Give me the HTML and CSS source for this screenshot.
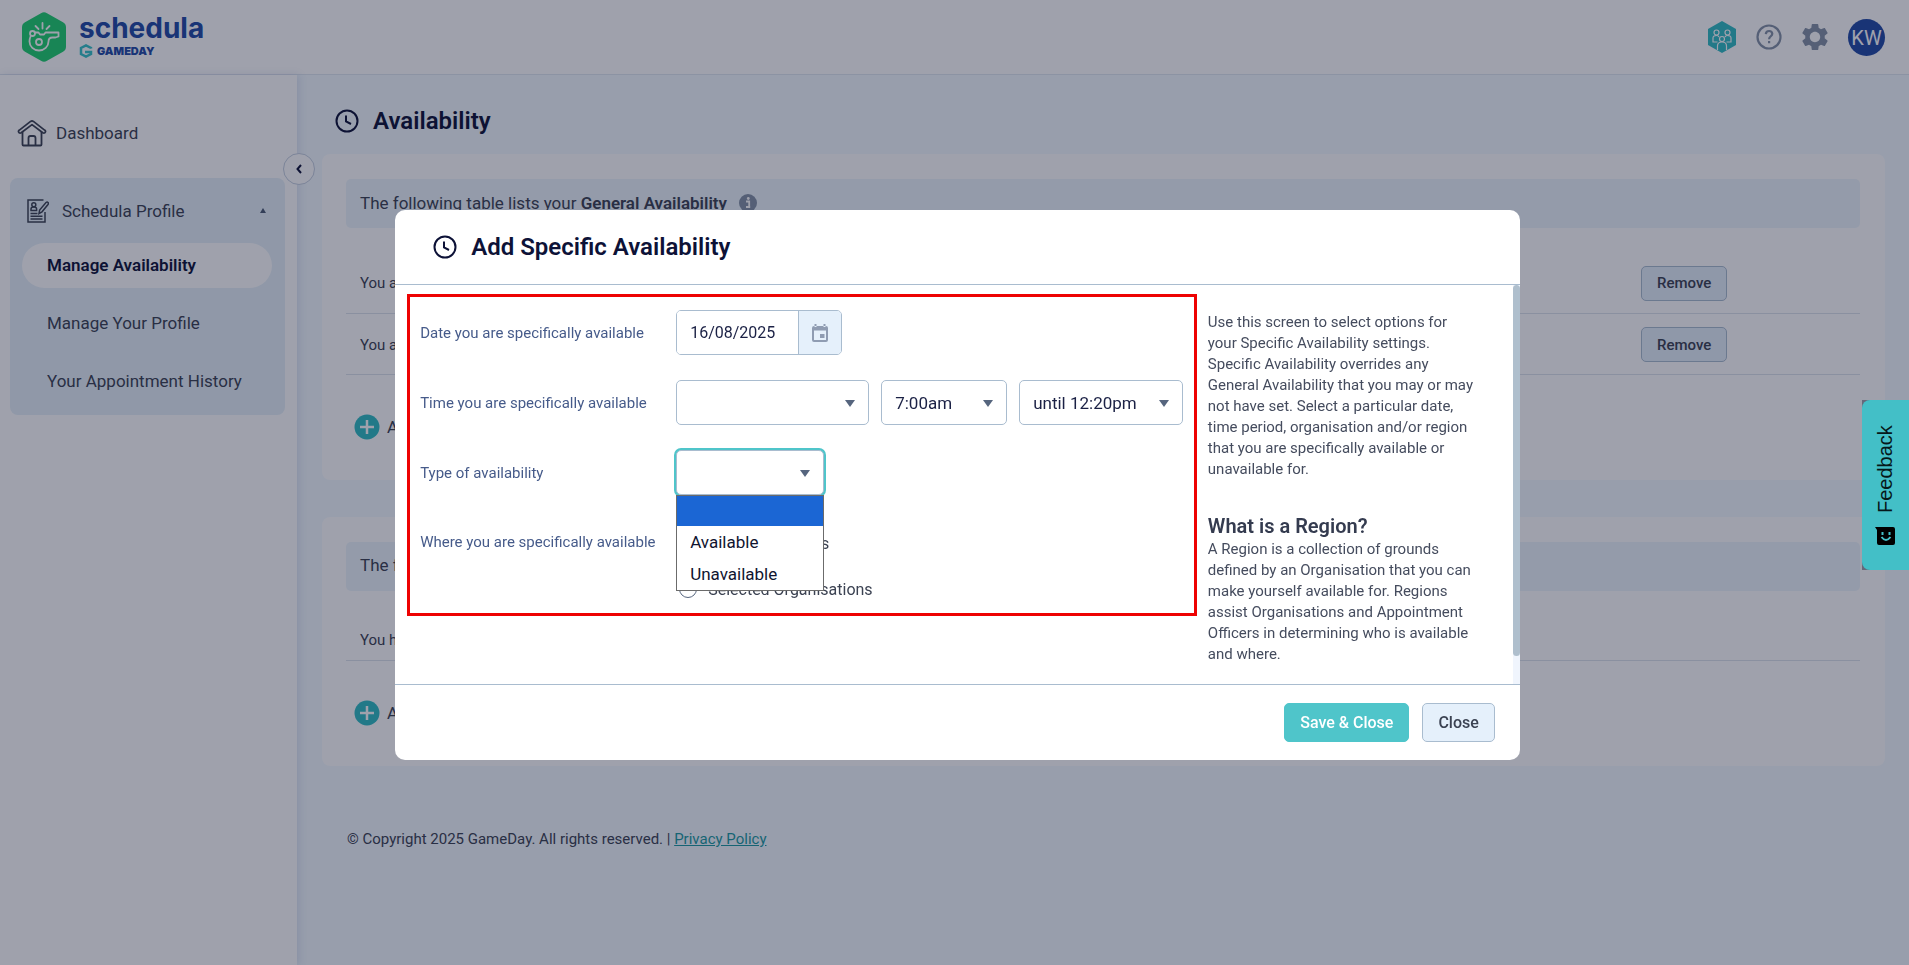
FILE: index.html
```html
<!DOCTYPE html>
<html lang="en">
<head>
    <meta charset="UTF-8">
    <meta name="viewport" content="width=device-width, initial-scale=1.0">
    <title>Schedula - Availability</title>
    <link rel="stylesheet" href="styles.css">
</head>
<body>
    <header class="topbar">
        <a href="#" class="logo">
            <svg class="logo-mark" viewBox="0 0 44 50" fill="none">
                <path d="M19 1.200q3-1.700 6 0l16 9q3 1.700 3 5v19.600q0 3.300-3 5l-16 9q-3 1.700-6 0l-16-9q-3-1.700-3-5V15.200q0-3.300 3-5z" fill="#1fd06f"/>
                <g stroke="#fff" stroke-width="1.800" stroke-linecap="round" stroke-linejoin="round">
                    <circle cx="17" cy="30" r="3"/>
                    <circle cx="10.500" cy="21.500" r="2.500"/>
                    <path d="M8.500 24.500Q7.500 27 7.500 29.500a9.500 9 0 0 0 19 0q0-4 4-4h3l3-1V20.500H23.500l-1.500 2h-4l-1.500-2h-3.500"/>
                    <path d="M13.500 14l3 3M20.500 11v5.500M27.500 14l-3 3"/>
                </g>
            </svg>
            <span class="logo-text">
                <span class="logo-name">schedula</span>
                <span class="logo-sub">
                    <svg width="14" height="14" viewBox="0 0 14 14" fill="none" stroke="#35c3c9" stroke-width="2.500">
                        <path d="M12 4.500V4L7 1.500 2 4v6l5 2.500L12 10V8H6"/>
                    </svg>
                    GAMEDAY
                </span>
            </span>
        </a>
        <nav class="topbar-icons">
            <a href="#" aria-label="Organisations">
                <svg width="28" height="32" viewBox="0 0 28 32" fill="none">
                    <path d="M14 0l14 8v16l-14 8-14-8V8z" fill="#2fbcc4"/>
                    <g stroke="#fff" stroke-width="1.200">
                        <circle cx="8.500" cy="11.500" r="2.500"/>
                        <circle cx="19.500" cy="11.500" r="2.500"/>
                        <path d="M9.500 21H5v-4q0-2.500 3.500-2.500 2 0 2.500 1.500M18.500 21H23v-4q0-2.500-3.500-2.500-2 0-2.500 1.500"/>
                        <circle cx="14" cy="18" r="2.500"/>
                        <path d="M9.500 29v-4q0-4 4.500-4t4.500 4v4"/>
                    </g>
                </svg>
            </a>
            <a href="#" aria-label="Help">
                <svg width="26" height="26" viewBox="0 0 26 26" fill="none" stroke="#8492a6" stroke-width="2.200">
                    <circle cx="13" cy="13" r="11.500"/>
                    <path d="M9.800 10.200q.3-3.200 3.300-3.200t3.200 2.800c0 2.400-3.200 2.600-3.200 5.400M13.100 17v2.200"/>
                </svg>
            </a>
            <a href="#" aria-label="Settings">
                <svg width="26" height="26" viewBox="2 2 20 20" fill="#8492a6">
                    <path d="M19.430 12.980c.040-.320.070-.640.070-.980s-.030-.660-.070-.980l2.110-1.650c.190-.150.240-.420.120-.640l-2-3.460c-.120-.220-.390-.300-.610-.220l-2.490 1c-.520-.400-1.080-.730-1.690-.980l-.380-2.650C14.460 2.180 14.250 2 14 2h-4c-.250 0-.460.180-.490.420l-.380 2.650c-.610.250-1.170.590-1.690.980l-2.490-1c-.230-.090-.490 0-.610.220l-2 3.460c-.130.220-.070.490.120.640l2.110 1.650c-.040.320-.070.650-.070.980s.030.660.070.980l-2.110 1.650c-.190.150-.240.420-.120.640l2 3.460c.120.220.390.300.610.220l2.490-1c.520.400 1.080.730 1.690.980l.380 2.650c.030.240.240.420.490.420h4c.250 0 .460-.180.490-.420l.380-2.650c.610-.250 1.170-.590 1.690-.980l2.490 1c.230.090.490 0 .610-.220l2-3.460c.120-.220.070-.490-.120-.640l-2.110-1.650zM12 16c-2.200 0-4-1.800-4-4s1.800-4 4-4 4 1.800 4 4-1.800 4-4 4z"/>
                </svg>
            </a>
            <a href="#" class="avatar">KW</a>
        </nav>
    </header>

    <div class="layout">
        <aside class="sidebar">
            <button class="collapse" aria-label="Collapse menu">
                <svg width="6" height="10" viewBox="0 0 6 10" fill="none" stroke="#0d1237" stroke-width="2"><path d="M5 1L1.500 5 5 9"/></svg>
            </button>
            <a href="#" class="nav-item">
                <svg width="30" height="28" viewBox="0 0 30 28" fill="none" stroke="#3b4252" stroke-width="1.800" stroke-linejoin="round">
                    <path d="M2.200 13.800q-1.600-1.400.2-2.700L13.600 2.400q1.400-1 2.800 0l11.200 8.700q1.800 1.300.2 2.700-.9.600-2 0L15 5.600 4.200 13.800q-1.100.6-2 0z"/>
                    <path d="M5.500 13v12.500q0 1 1 1h17q1 0 1-1V13M11.500 26.500V19q0-2 2-2h3q2 0 2 2v7.500"/>
                </svg>
                Dashboard
            </a>
            <div class="nav-group">
                <a href="#" class="nav-head">
                    <svg width="22" height="24" viewBox="0 0 22 24" fill="none" stroke="#3b4252" stroke-width="1.500">
                        <path d="M16.500 1H1v22h17V13"/>
                        <circle cx="6.800" cy="5.800" r="2"/>
                        <path d="M4 11.500V10q0-2 2.800-2t2.800 2v1.500zM3.500 14.500h7M3.500 17.200h12M3.500 20h12"/>
                        <path d="M12 14.500l.6-3.500L19 3.500q1.200-.8 2 0t0 2L15 12.800z"/>
                    </svg>
                    <span>Schedula Profile</span>
                    <svg class="nav-arrow" width="6" height="5" viewBox="0 0 6 5"><path d="M3 0l3 5H0z" fill="#4b5b73"/></svg>
                </a>
                <a href="#" class="nav-sub active">Manage Availability</a>
                <a href="#" class="nav-sub">Manage Your Profile</a>
                <a href="#" class="nav-sub">Your Appointment History</a>
            </div>
        </aside>

        <main class="main">
            <h1 class="page-title">
                <svg width="24" height="24" viewBox="0 0 24 24" fill="none" stroke="#0d1237" stroke-width="2"><circle cx="12" cy="12" r="10.500"/><path d="M11 6.500v6l5 2.500"/></svg>
                Availability
            </h1>

            <section class="card">
                <h2 class="card-head">
                    <span>The following table lists your <b>General Availability</b></span>
                    <svg width="18" height="18" viewBox="0 0 18 18"><circle cx="9" cy="9" r="9" fill="#8492a6"/><path d="M7 7.500h3.200V13h1M7 13h4" stroke="#fff" stroke-width="1.800" fill="none"/><circle cx="9.300" cy="4.500" r="1.400" fill="#fff"/></svg>
                </h2>
                <table class="list">
                    <tr>
                        <td>You are available every Saturday</td>
                        <td class="list-action"><button class="btn btn-small">Remove</button></td>
                    </tr>
                    <tr>
                        <td>You are available every Sunday</td>
                        <td class="list-action"><button class="btn btn-small">Remove</button></td>
                    </tr>
                </table>
                <a href="#" class="add">
                    <svg width="26" height="26" viewBox="0 0 26 26"><circle cx="13" cy="13" r="12.500" fill="#2fbcc4"/><path d="M13 6v14M6 13h14" stroke="#fff" stroke-width="2.500"/></svg>
                    Add General Availability
                </a>
            </section>

            <section class="card">
                <h2 class="card-head"><span>The following table lists your <b>Specific Availability</b></span></h2>
                <table class="list list-empty">
                    <tr><td>You have no Specific Availability</td></tr>
                </table>
                <a href="#" class="add">
                    <svg width="26" height="26" viewBox="0 0 26 26"><circle cx="13" cy="13" r="12.500" fill="#2fbcc4"/><path d="M13 6v14M6 13h14" stroke="#fff" stroke-width="2.500"/></svg>
                    Add Specific Availability
                </a>
            </section>

            <footer class="footer">© Copyright 2025 GameDay. All rights reserved. | <a href="#">Privacy Policy</a></footer>
        </main>
    </div>

    <div class="overlay">
        <div class="modal" role="dialog" aria-labelledby="modal-title">
            <div class="modal-header">
                <svg width="24" height="24" viewBox="0 0 24 24" fill="none" stroke="#0d1237" stroke-width="2"><circle cx="12" cy="12" r="10.500"/><path d="M11 6.500v6l5 2.500"/></svg>
                <h2 id="modal-title">Add Specific Availability</h2>
            </div>
            <div class="modal-scroll">
                <div class="modal-body">
                    <form class="form" id="availability">
                        <div class="row">
                            <label for="date">Date you are specifically available</label>
                            <div class="date">
                                <input type="text" id="date" value="16/08/2025">
                                <button type="button" aria-label="Pick a date">
                                    <svg width="16" height="18" viewBox="0 0 16 18"><path d="M2 2h12q2 0 2 2v12q0 2-2 2H2q-2 0-2-2V4q0-2 2-2zm0 4.500V16h12V6.500zM2.500 0h2v3h-2zM11.500 0h2v3h-2zM8 10h4.500v4H8z" fill="#8f9cb2" fill-rule="evenodd"/></svg>
                                </button>
                            </div>
                        </div>
                        <div class="row">
                            <label for="period">Time you are specifically available</label>
                            <div class="selects">
                                <span class="select select-period"><select id="period"><option></option></select></span>
                                <span class="select select-from"><select aria-label="From"><option>7:00am</option></select></span>
                                <span class="select select-until"><select aria-label="Until"><option>until 12:20pm</option></select></span>
                            </div>
                        </div>
                        <div class="row">
                            <label for="type">Type of availability</label>
                            <div class="select select-type">
                                <select id="type"><option></option><option>Available</option><option>Unavailable</option></select>
                                <ul class="menu">
                                    <li class="selected"></li>
                                    <li>Available</li>
                                    <li>Unavailable</li>
                                </ul>
                            </div>
                        </div>
                        <div class="row row-top">
                            <span class="label">Where you are specifically available</span>
                            <div class="radios">
                                <label><input type="radio" name="where"> All Organisations</label>
                                <label><input type="radio" name="where"> Selected Organisations</label>
                            </div>
                        </div>
                    </form>
                    <div class="help">
                        <p>Use this screen to select options for<br>
                        your Specific Availability settings.<br>
                        Specific Availability overrides any<br>
                        General Availability that you may or may<br>
                        not have set. Select a particular date,<br>
                        time period, organisation and/or region<br>
                        that you are specifically available or<br>
                        unavailable for.</p>
                        <h3>What is a Region?</h3>
                        <p>A Region is a collection of grounds<br>
                        defined by an Organisation that you can<br>
                        make yourself available for. Regions<br>
                        assist Organisations and Appointment<br>
                        Officers in determining who is available<br>
                        and where.</p>
                    </div>
                </div>
                <div class="scrollbar"><div class="scrollbar-thumb"></div></div>
            </div>
            <div class="modal-footer">
                <button class="btn btn-primary" form="availability">Save &amp; Close</button>
                <button class="btn">Close</button>
            </div>
        </div>
    </div>

    <button class="feedback">
        <svg width="20" height="18" viewBox="0 0 20 18">
            <path d="M0 0h18q2 0 2 2v14q0 2-2 2H4q-2 0-2-2V3z" fill="#000"/>
            <path d="M6.500 10q4.500 6 9 0" stroke="#43bfc7" stroke-width="2" fill="none"/>
            <path d="M6.500 5h2v3h-2zM13.500 5h2v3h-2z" fill="#43bfc7"/>
        </svg>
        <span>Feedback</span>
    </button>
</body>
</html>
```
FILE: styles.css
```css
* {
    margin: 0;
    padding: 0;
    box-sizing: border-box;
}

body {
    font-family: Roboto, 'Liberation Sans', sans-serif;
    font-size: 15px;
    background: #f3faff;
    color: #3b4252;
    min-height: 100vh;
    display: flex;
    flex-direction: column;
    overflow: hidden;
}

a {
    color: inherit;
    text-decoration: none;
}

button,
input,
select {
    font: inherit;
    color: inherit;
}

svg {
    flex-shrink: 0;
    display: block;
}

/* top bar */
.topbar {
    height: 75px;
    padding: 0 24px 0 22px;
    background: #fff;
    border-bottom: 1px solid #e0e8f0;
    display: flex;
    align-items: center;
    justify-content: space-between;
}

.logo {
    display: flex;
    align-items: center;
    gap: 13px;
    color: #214aa6;
}

.logo-mark {
    width: 44px;
    height: 50px;
}

.logo-name {
    display: block;
    font-family: Inter, sans-serif;
    font-size: 28px;
    line-height: 28px;
    font-weight: 700;
}

.logo-sub {
    display: flex;
    align-items: center;
    gap: 4px;
    font-family: Inter, sans-serif;
    font-size: 11px;
    line-height: 18px;
    font-weight: 900;
}

.topbar-icons {
    display: flex;
    align-items: center;
    gap: 20px;
}

.avatar {
    width: 37px;
    height: 37px;
    border-radius: 50%;
    background: #214aa6;
    color: #fff;
    font-size: 20px;
    line-height: 38px;
    text-align: center;
}

.layout {
    display: flex;
    flex: 1;
}

/* sidebar */
.sidebar {
    position: relative;
    width: 297px;
    padding: 36px 12px 0 10px;
    background: #fff;
    box-shadow: 2px 0 8px rgba(60, 90, 160, 0.15);
    font-size: 17px;
}

.collapse {
    position: absolute;
    right: -18px;
    top: 78px;
    width: 32px;
    height: 32px;
    border: 1px solid #c4cfdf;
    border-radius: 50%;
    background: #fff;
    display: flex;
    align-items: center;
    justify-content: center;
}

.nav-item {
    display: flex;
    align-items: center;
    gap: 9px;
    height: 44px;
    padding-left: 7px;
}

.nav-group {
    margin-top: 23px;
    padding: 0 13px 11px 12px;
    background: #e6f1f9;
    border-radius: 8px;
    display: flex;
    flex-direction: column;
    gap: 13px;
}

.nav-head {
    display: flex;
    align-items: center;
    height: 52px;
    padding: 13px 6px 0 5px;
    gap: 13px;
}

.nav-arrow {
    margin-left: auto;
}

.nav-sub {
    height: 45px;
    line-height: 45px;
    padding-left: 25px;
    border-radius: 23px;
}

.nav-sub.active {
    background: #fff;
    color: #0d1237;
    font-weight: 600;
}

/* content */
.main {
    flex: 1;
    padding: 28px 24px 0 25px;
}

.page-title {
    display: flex;
    align-items: center;
    gap: 14px;
    height: 36px;
    padding-left: 13px;
    margin-bottom: 15px;
    font-size: 24px;
    font-weight: 600;
    color: #0d1237;
}

.card {
    background: #fff;
    border-radius: 8px;
    padding: 25px 25px 39px 24px;
    margin-bottom: 37px;
}

.card-head {
    display: flex;
    align-items: center;
    gap: 12px;
    height: 49px;
    padding: 0 14px 2px;
    background: #edf6fc;
    border-radius: 5px;
    font-size: 17px;
    font-weight: 400;
}

.card-head b {
    font-weight: 600;
}

.list {
    width: 100%;
    margin-top: 24px;
    border-collapse: collapse;
}

.list td {
    height: 61px;
    padding: 2px 0 0 14px;
    border-bottom: 1px solid #dce3eb;
}

.list .list-action {
    width: 219px;
    padding-left: 0;
}

.list-empty {
    margin-top: 28px;
}

.list-empty td {
    height: 42px;
}

.add {
    display: flex;
    align-items: center;
    gap: 7px;
    height: 28px;
    margin: 38px 8px 0;
    font-size: 17px;
}

.footer {
    padding: 26px 25px;
    font-size: 15px;
    line-height: 20px;
}

.footer a {
    color: #1b9aa2;
    text-decoration: underline;
}

.btn {
    height: 39px;
    padding: 0 15px;
    border: 1px solid #a9bccf;
    border-radius: 5px;
    background: #e5f0fb;
    font-size: 16px;
    font-weight: 500;
}

.btn-small {
    height: 35px;
    font-size: 15px;
}

.btn-primary {
    background: #4fc5ca;
    border-color: #4fc5ca;
    color: #fff;
}

/* modal */
.overlay {
    position: fixed;
    inset: 0;
    padding: 5px 0 0 6px;
    background: rgba(15, 20, 47, 0.4);
    display: flex;
    align-items: center;
    justify-content: center;
}

.modal {
    width: 59.1%;
    min-width: 1100px;
    background: #fff;
    border-radius: 10px;
    overflow: hidden;
}

.modal-header {
    display: flex;
    align-items: center;
    gap: 14px;
    height: 75px;
    padding-left: 38px;
    border-bottom: 1px solid #a9bccf;
    color: #0d1237;
}

.modal-header h2 {
    font-size: 24px;
    font-weight: 600;
}

.modal-scroll {
    display: flex;
    max-height: 399px;
}

.modal-body {
    flex: 1;
    display: flex;
    align-items: flex-start;
    gap: 11px;
    padding: 9px 0 0 12px;
    overflow-y: auto;
    scrollbar-width: none;
}

.scrollbar {
    width: 7px;
    background: #f0f5fd;
}

.scrollbar-thumb {
    height: 93%;
    background: #afbfcd;
    border-radius: 4px;
}

.form {
    flex: 1;
    display: flex;
    flex-direction: column;
    gap: 25px;
    padding: 13px 10px 1px;
    border: 3px solid #ee0202;
}

.row {
    display: grid;
    grid-template-columns: 256px 1fr;
    align-items: center;
    min-height: 45px;
}

.row-top {
    align-items: start;
}

.row > label,
.label {
    font-size: 15px;
    color: #465b8a;
}

.label {
    line-height: 45px;
}

.date {
    display: flex;
    width: 166px;
    height: 45px;
    border: 1px solid #a9bccf;
    border-radius: 5px;
    overflow: hidden;
}

.date input {
    width: 121px;
    padding-left: 13px;
    border: 0;
    font-size: 16px;
    color: #1b2145;
}

.date button {
    flex: 1;
    border: 0;
    border-left: 1px solid #a9bccf;
    background: #e5f0fb;
    display: flex;
    align-items: center;
    justify-content: center;
}

.selects {
    display: flex;
    gap: 12px;
}

.select {
    position: relative;
    height: 45px;
}

.select::after {
    content: "";
    position: absolute;
    right: 14px;
    top: 20px;
    border: 5px solid transparent;
    border-top: 7px solid #56657e;
    border-bottom: 0;
}

.select select {
    width: 100%;
    height: 45px;
    padding: 0 13px;
    appearance: none;
    background: #fff;
    border: 1px solid #a9bccf;
    border-radius: 5px;
    font-size: 17px;
    color: #1b2145;
}

.select-period {
    width: 193px;
}

.select-from {
    width: 126px;
}

.select-until {
    width: 164px;
}

.select-type {
    width: 148px;
}

.select-type select {
    box-shadow: 0 0 0 2px #4fc5ca;
}

.menu {
    position: absolute;
    z-index: 1;
    top: 100%;
    left: 0;
    width: 100%;
    border: 1px solid #6b6b6b;
    background: #fff;
    list-style: none;
    font-size: 17px;
    line-height: 32px;
    color: #10142f;
}

.menu li {
    height: 32px;
    padding-left: 13px;
}

.menu .selected {
    height: 30px;
    background: #1b66d4;
}

.radios label {
    display: flex;
    align-items: center;
    gap: 11px;
    height: 46px;
    padding-left: 3px;
    font-size: 16px;
}

.radios input {
    width: 18px;
    height: 18px;
    appearance: none;
    border: 1px solid #56657e;
    border-radius: 50%;
}

.help {
    width: 305px;
    padding: 18px 0 41px;
    font-size: 15px;
    line-height: 21px;
    color: #454c5e;
}

.help h3 {
    margin-top: 33px;
    font-size: 20px;
    line-height: 26px;
    font-weight: 600;
    color: #343b4f;
}

.modal-footer {
    display: flex;
    align-items: center;
    justify-content: flex-end;
    gap: 13px;
    height: 76px;
    padding-right: 25px;
    border-top: 1px solid #a9bccf;
}

.feedback {
    position: fixed;
    right: 0;
    top: 400px;
    width: 47px;
    height: 170px;
    border: 0;
    border-radius: 0 8px 8px 0;
    background: #43bfc7;
    color: #06181a;
    font-family: 'Liberation Sans', Arial, sans-serif;
    font-size: 20px;
    display: flex;
    align-items: center;
    justify-content: center;
    gap: 14px;
    writing-mode: vertical-rl;
    transform: rotate(180deg);
}

.feedback svg {
    transform: rotate(180deg);
}
```
